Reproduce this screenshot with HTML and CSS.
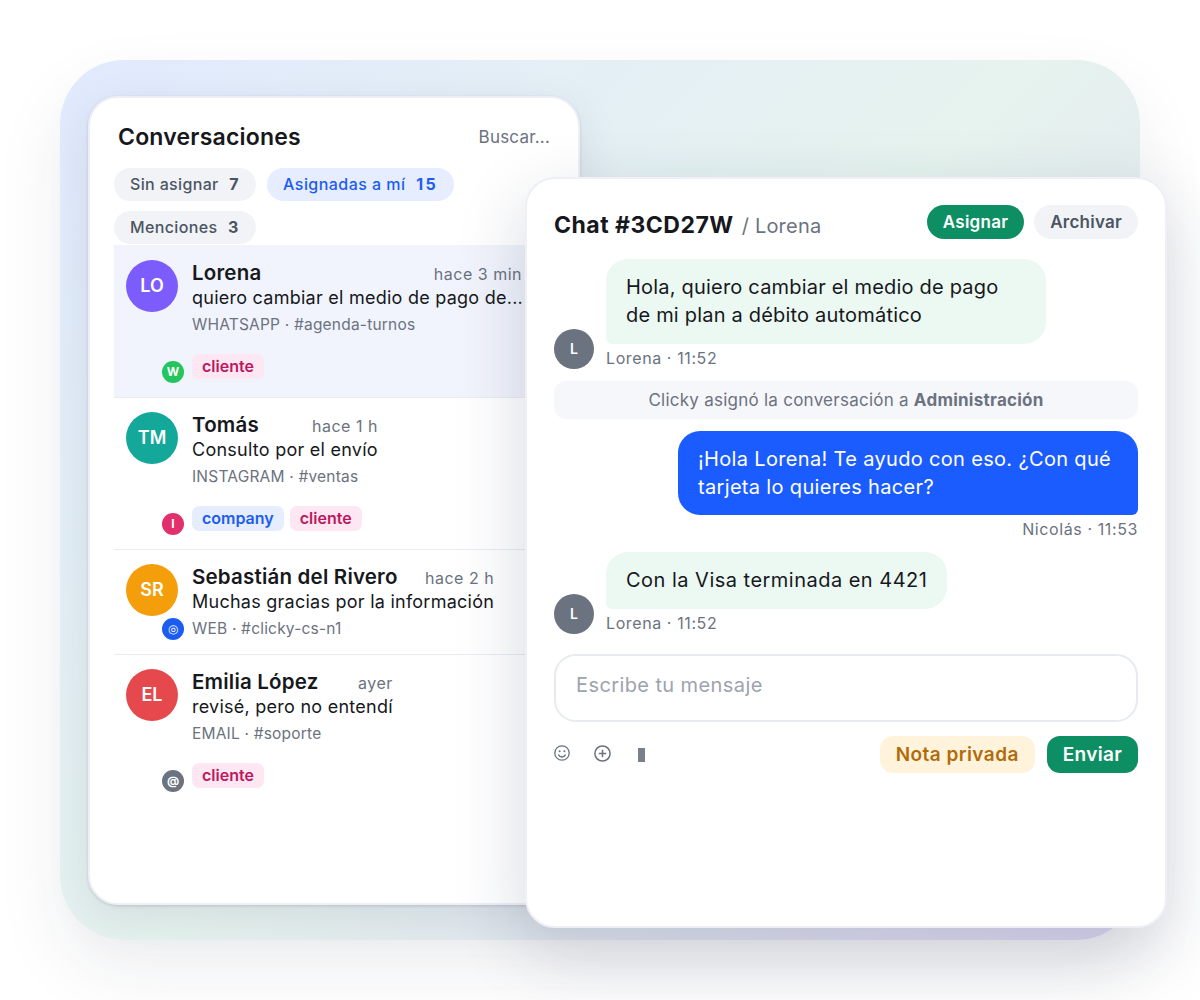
FILE: index.html
```html
<!DOCTYPE html>
<html lang="es">
<head>
	<meta charset="UTF-8">
	<title>Conversaciones</title>
	<link rel="stylesheet" href="styles.css">
</head>
<body>
	<div class="stage">
		<div class="backdrop"></div>

		<!-- lista de conversaciones -->
		<div class="card list-card">
			<div class="list-head">
				<h2>Conversaciones</h2>
				<span class="search">Buscar...</span>
			</div>
			<div class="filters">
				<span class="filter">Sin asignar <b>7</b></span>
				<span class="filter active">Asignadas a mí <b>15</b></span>
				<span class="filter">Menciones <b>3</b></span>
			</div>

			<div class="row selected">
				<div class="side">
					<div class="avatar purple">LO</div>
					<div class="badge wa">W</div>
				</div>
				<div class="body limited">
					<div class="top"><span class="name">Lorena</span><span class="time">hace 3 min</span></div>
					<div class="preview">quiero cambiar el medio de pago de...</div>
					<div class="meta">WHATSAPP · #agenda-turnos</div>
					<div class="tags"><span class="tag pink">cliente</span></div>
				</div>
			</div>

			<div class="row">
				<div class="side">
					<div class="avatar teal">TM</div>
					<div class="badge ig">I</div>
				</div>
				<div class="body">
					<div class="top"><span class="name">Tomás</span><span class="time">hace 1 h</span></div>
					<div class="preview">Consulto por el envío</div>
					<div class="meta">INSTAGRAM · #ventas</div>
					<div class="tags"><span class="tag blue">company</span><span class="tag pink">cliente</span></div>
				</div>
			</div>

			<div class="row">
				<div class="side">
					<div class="avatar orange">SR</div>
					<div class="badge web">◎</div>
				</div>
				<div class="body">
					<div class="top"><span class="name">Sebastián del Rivero</span><span class="time">hace 2 h</span></div>
					<div class="preview">Muchas gracias por la información</div>
					<div class="meta">WEB · #clicky-cs-n1</div>
				</div>
			</div>

			<div class="row last">
				<div class="side">
					<div class="avatar red">EL</div>
					<div class="badge mail">@</div>
				</div>
				<div class="body">
					<div class="top"><span class="name">Emilia López</span><span class="time">ayer</span></div>
					<div class="preview">revisé, pero no entendí</div>
					<div class="meta">EMAIL · #soporte</div>
					<div class="tags"><span class="tag pink">cliente</span></div>
				</div>
			</div>
		</div>

		<!-- chat abierto -->
		<div class="card chat-card">
			<div class="chat-head">
				<div class="chat-title"><h2>Chat #3CD27W</h2><span>/ Lorena</span></div>
				<div class="chat-actions">
					<span class="pill green">Asignar</span>
					<span class="pill grey">Archivar</span>
				</div>
			</div>

			<div class="msg">
				<div class="msg-avatar">L</div>
				<div>
					<div class="bubble in wide">Hola, quiero cambiar el medio de pago<br>de mi plan a débito automático</div>
					<div class="msg-meta">Lorena · 11:52</div>
				</div>
			</div>

			<div class="system">Clicky asignó la conversación a <b>Administración</b></div>

			<div class="msg mine">
				<div>
					<div class="bubble out">¡Hola Lorena! Te ayudo con eso. ¿Con qué<br>tarjeta lo quieres hacer?</div>
					<div class="msg-meta">Nicolás · 11:53</div>
				</div>
			</div>

			<div class="msg third">
				<div class="msg-avatar">L</div>
				<div>
					<div class="bubble in">Con la Visa terminada en 4421</div>
					<div class="msg-meta">Lorena · 11:52</div>
				</div>
			</div>

			<div class="composer">Escribe tu mensaje</div>

			<div class="toolbar">
				<div class="tools">
					<svg class="tool smile" viewBox="0 0 16 16"><circle cx="8" cy="8" r="7.2"/><circle class="dot" cx="5.6" cy="6.2" r="1"/><circle class="dot" cx="10.4" cy="6.2" r="1"/><path d="M4.4 9.6c.8 1.6 2.1 2.4 3.6 2.4s2.8-.8 3.6-2.4"/></svg>
					<svg class="tool plus" viewBox="0 0 17 17"><circle cx="8.5" cy="8.5" r="7.6"/><path d="M8.5 4.8v7.4M4.8 8.5h7.4"/></svg>
					<span class="bar-glyph"></span>
				</div>
				<div class="sends">
					<span class="btn amber">Nota privada</span>
					<span class="btn send">Enviar</span>
				</div>
			</div>
		</div>
	</div>
</body>
</html>
```

FILE: styles.css
```css
* {
	box-sizing: border-box;
}
html, body {
	margin: 0;
	background: #fff;
}
body {
	font-family: "Inter", "Noto Sans", sans-serif;
	color: #16181d;
}
.stage {
	position: relative;
	width: 1200px;
	height: 1000px;
	overflow: hidden;
}
.backdrop {
	position: absolute;
	left: 60px;
	top: 60px;
	width: 1080px;
	height: 880px;
	border-radius: 64px;
	background: linear-gradient(135deg, #e1eafe 0%, #e6f3ee 50%, #ddd8f3 100%);
	box-shadow: 0 30px 70px rgba(30, 41, 70, .08);
}
.card {
	position: absolute;
	background: #fff;
	border: 2px solid #eef0f5;
	border-radius: 30px;
}

/* lista */
.list-card {
	left: 88px;
	top: 96px;
	width: 492px;
	height: 809px;
	padding: 0 24px;
	box-shadow: 0 1px 3px rgba(30, 41, 70, .16), 0 14px 44px rgba(30, 41, 70, .1);
}
.list-head {
	display: flex;
	justify-content: space-between;
	align-items: center;
	padding: 22px 4px 0;
	height: 56px;
}
.list-head h2 {
	margin: 0;
	font-size: 23px;
	font-weight: 600;
	letter-spacing: .2px;
}
.search {
	font-size: 17px;
	letter-spacing: .2px;
	color: #6b7280;
}
.filters {
	display: flex;
	flex-wrap: wrap;
	gap: 10px 11px;
	margin-top: 14px;
	width: 400px;
}
.filter {
	height: 33px;
	line-height: 33px;
	padding: 0 16px;
	border-radius: 17px;
	background: #f1f3f6;
	color: #4b5563;
	font-size: 16px;
	font-weight: 500;
	letter-spacing: .35px;
}
.filter b {
	margin-left: 6px;
	font-weight: 700;
	letter-spacing: 1.5px;
}
.filter.active {
	background: #e5edfe;
	color: #1d5cf0;
	letter-spacing: .45px;
}
.filter.active b {
	letter-spacing: 2.5px;
}
.row {
	display: flex;
	gap: 14px;
	padding: 14px 12px;
	width: 442px;
	border-bottom: 1px solid #e9ecf1;
}
.row.selected {
	background: #f1f4fc;
	margin-top: 1px;
	padding-top: 15px;
}
.row.last {
	border-bottom: 0;
}
.side {
	display: flex;
	flex-direction: column;
	justify-content: space-between;
	width: 52px;
	flex: none;
}
.avatar {
	width: 52px;
	height: 52px;
	border-radius: 50%;
	color: #fff;
	font-size: 18px;
	font-weight: 600;
	line-height: 52px;
	text-align: center;
}
.purple { background: #7c5cfc; }
.teal { background: #13a89a; }
.orange { background: #f59e0b; }
.red { background: #e5484d; }
.badge {
	width: 22px;
	height: 22px;
	margin-left: 36px;
	margin-top: 2px;
	border-radius: 50%;
	color: #fff;
	font-size: 12px;
	font-weight: 700;
	line-height: 22px;
	text-align: center;
}
.wa { background: #22c55e; }
.ig { background: #e1306c; }
.web { background: #1d5cf0; font-weight: 400; }
.mail { background: #6b7280; }
.body {
	width: fit-content;
}
.body.limited {
	width: 330px;
}
.top {
	display: flex;
	justify-content: space-between;
	align-items: baseline;
	gap: 24px;
}
.name {
	font-size: 20.5px;
	font-weight: 600;
	letter-spacing: .2px;
	line-height: 26px;
}
.time {
	font-size: 16px;
	letter-spacing: .5px;
	color: #6b7280;
}
.preview {
	font-size: 18px;
	letter-spacing: .25px;
	line-height: 24px;
	white-space: nowrap;
}
.meta {
	font-size: 15.5px;
	letter-spacing: .2px;
	color: #6b7280;
	line-height: 23px;
	margin-top: 3px;
}
.tags {
	display: flex;
	gap: 6px;
	margin-top: 18px;
	margin-bottom: 4px;
}
.tag {
	height: 25px;
	line-height: 24px;
	padding: 0 10px;
	border-radius: 7px;
	font-size: 16px;
	font-weight: 600;
}
.pink {
	background: #fce7f3;
	color: #be185d;
}
.blue {
	background: #e5edfe;
	color: #1d5cf0;
}

/* chat */
.chat-card {
	left: 525px;
	top: 177px;
	width: 642px;
	height: 751px;
	padding: 26px 27px 0;
	box-shadow: 0 24px 70px rgba(30, 41, 70, .18);
}
.chat-head {
	display: flex;
	justify-content: space-between;
	align-items: flex-start;
	height: 36px;
}
.chat-title {
	display: flex;
	align-items: baseline;
	gap: 8px;
	padding-top: 6px;
}
.chat-title h2 {
	margin: 0;
	font-size: 23px;
	font-weight: 700;
	letter-spacing: .5px;
}
.chat-title span {
	font-size: 20px;
	letter-spacing: .2px;
	color: #6b7280;
}
.chat-actions {
	display: flex;
	gap: 10px;
}
.pill {
	height: 34px;
	line-height: 34px;
	padding: 0 16px;
	border-radius: 17px;
	font-size: 17px;
	font-weight: 600;
	letter-spacing: .25px;
}
.green {
	background: #0e8f63;
	color: #fff;
}
.grey {
	background: #f1f3f6;
	color: #4b5563;
}
.msg {
	display: flex;
	align-items: flex-end;
	gap: 12px;
	margin-top: 18px;
}
.msg.mine {
	justify-content: flex-end;
	margin-top: 12px;
	text-align: right;
}
.msg.third {
	margin-top: 12px;
}
.msg-avatar {
	width: 40px;
	height: 40px;
	flex: none;
	border-radius: 50%;
	background: #6b7280;
	color: #fff;
	font-size: 14px;
	font-weight: 600;
	line-height: 40px;
	text-align: center;
}
.bubble {
	padding: 14px 20px 15px;
	font-size: 20px;
	letter-spacing: .2px;
	line-height: 28px;
	text-align: left;
}
.bubble.in {
	background: #ecf8f2;
	border-radius: 22px 22px 22px 6px;
	width: fit-content;
}
.bubble.in.wide {
	width: 440px;
}
.third .bubble {
	letter-spacing: .48px;
}
.bubble.out {
	width: 460px;
	background: #1a5cff;
	color: #fff;
	padding-bottom: 14px;
	border-radius: 22px 22px 6px 22px;
	letter-spacing: .33px;
}
.msg-meta {
	font-size: 16px;
	letter-spacing: .6px;
	color: #6b7280;
	line-height: 20px;
	margin-top: 4px;
	padding-bottom: 1px;
}
.system {
	height: 38px;
	line-height: 38px;
	margin-top: 12px;
	border-radius: 12px;
	background: #f6f7fb;
	color: #6b7280;
	font-size: 17px;
	letter-spacing: .25px;
	text-align: center;
}
.composer {
	height: 68px;
	margin-top: 20px;
	padding: 0 20px;
	border: 2px solid #e7eaf0;
	border-radius: 22px;
	color: #9ca3af;
	font-size: 20px;
	letter-spacing: .4px;
	line-height: 58px;
}
.toolbar {
	display: flex;
	justify-content: space-between;
	align-items: center;
	margin-top: 14px;
}
.tools {
	display: flex;
	align-items: center;
	padding-bottom: 3px;
}
.tool {
	fill: none;
	stroke: #6b7280;
	stroke-width: 1.3;
}
.smile {
	width: 16px;
	height: 16px;
	margin-right: 24px;
}
.plus {
	width: 17px;
	height: 17px;
	margin-right: 27px;
	stroke-width: 1.5;
}
.tool .dot {
	fill: #6b7280;
	stroke: none;
}
.bar-glyph {
	width: 7px;
	height: 14px;
	margin-top: 4px;
	background: #7a7f8c;
}
.sends {
	display: flex;
	gap: 12px;
}
.btn {
	height: 37px;
	line-height: 37px;
	padding: 0 16px;
	border-radius: 13px;
	font-size: 19px;
	font-weight: 600;
	letter-spacing: .45px;
}
.amber {
	background: #fff3dc;
	color: #b26b0a;
}
.send {
	background: #0e8f63;
	color: #fff;
	letter-spacing: .3px;
}
```
